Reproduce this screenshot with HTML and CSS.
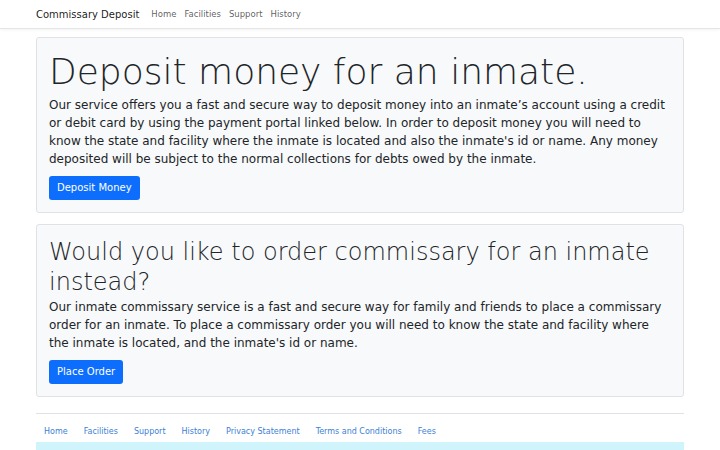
FILE: index.html
```html
<!DOCTYPE html>
<html lang="en">
<head>
    <meta charset="UTF-8">
    <meta name="viewport" content="width=device-width, initial-scale=1.0">
    <title>Commissary Deposit</title>
    <link rel="stylesheet" href="styles.css">
</head>
<body>
    <nav class="navbar">
        <div class="container nav-inner">
            <a class="brand" href="#">Commissary Deposit</a>
            <ul class="nav-links">
                <li><a href="#">Home</a></li>
                <li><a href="#">Facilities</a></li>
                <li><a href="#">Support</a></li>
                <li><a href="#">History</a></li>
            </ul>
        </div>
    </nav>

    <main class="container">
        <div class="panel">
            <h1 class="display">Deposit money for an inmate.</h1>
            <p class="lead">Our service offers you a fast and secure way to deposit money into an inmate’s account using a credit or debit card by using the payment portal linked below. In order to deposit money you will need to know the state and facility where the inmate is located and also the inmate's id or name. Any money deposited will be subject to the normal collections for debts owed by the inmate.</p>
            <a class="btn" href="#">Deposit Money</a>
        </div>

        <div class="panel">
            <h2 class="subdisplay">Would you like to order commissary for an inmate instead?</h2>
            <p class="lead">Our inmate commissary service is a fast and secure way for family and friends to place a commissary order for an inmate. To place a commissary order you will need to know the state and facility where the inmate is located, and the inmate's id or name.</p>
            <a class="btn" href="#">Place Order</a>
        </div>
    </main>

    <footer class="container footer">
        <ul class="footer-links">
            <li><a href="#">Home</a></li>
            <li><a href="#">Facilities</a></li>
            <li><a href="#">Support</a></li>
            <li><a href="#">History</a></li>
            <li><a href="#">Privacy Statement</a></li>
            <li><a href="#">Terms and Conditions</a></li>
            <li><a href="#">Fees</a></li>
        </ul>
        <div class="notice"></div>
    </footer>
</body>
</html>
```

FILE: styles.css
```css
* {
    box-sizing: border-box;
}
body {
    margin: 0;
    font-family: "DejaVu Sans", sans-serif;
    color: #212529;
    background-color: #fff;
}
a {
    text-decoration: none;
}
.container {
    width: 648px;
    margin: 0 auto;
}
.navbar {
    height: 29px;
    border-bottom: 1px solid #e5e5e5;
    box-shadow: 0 1px 3px rgba(0, 0, 0, 0.05);
    margin-bottom: 8px;
}
.nav-inner {
    display: flex;
    align-items: center;
    height: 100%;
}
.brand {
    font-size: 10px;
    color: rgba(0, 0, 0, 0.9);
    margin-right: 12px;
}
.nav-links {
    display: flex;
    list-style: none;
    margin: 0;
    padding: 0;
    gap: 8px;
    font-size: 8.5px;
}
.nav-links a {
    color: rgba(0, 0, 0, 0.65);
}
.panel {
    background-color: #f8f9fa;
    border: 1px solid #dfe2e6;
    border-radius: 3px;
    padding: 12px 12px 12px;
    margin-bottom: 11px;
}
.display {
    font-size: 36px;
    font-weight: 300;
    line-height: 1.2;
    margin: 0 0 3px;
}
.subdisplay {
    font-size: 24px;
    font-weight: 300;
    line-height: 30px;
    margin: 0 0 1px;
}
.lead {
    font-size: 12px;
    line-height: 18px;
    margin: 0 0 8px;
}
.btn {
    display: inline-block;
    background-color: #0d6efd;
    color: #fff;
    font-size: 10px;
    line-height: 14px;
    padding: 5px 8px;
    border-radius: 3px;
}
.footer {
    border-top: 1px solid #dee2e6;
    margin-top: 16px;
}
.footer-links {
    display: flex;
    list-style: none;
    margin: 0;
    padding: 13px 0 6px 8px;
    gap: 16px;
    font-size: 8px;
}
.footer-links a {
    color: #3d7fd6;
}
.notice {
    height: 30px;
    background-color: #cff4fc;
}
```
